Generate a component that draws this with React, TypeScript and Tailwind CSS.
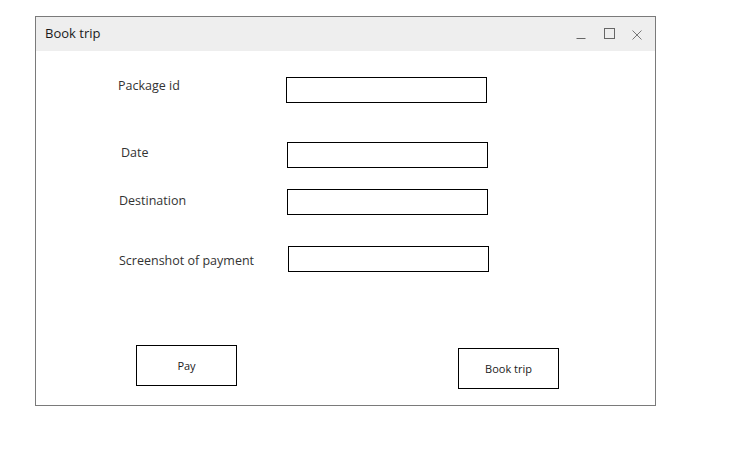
import React from "react";

const font = { fontFamily: '"Open Sans", "Noto Sans", sans-serif' };

function Field({ label, rowMt, labelMl, labelMt, inputMl, inputMt }: { label: string; rowMt: string; labelMl: string; labelMt: string; inputMl: string; inputMt: string }) {
  return (
    <div className={`flex items-start ${rowMt}`}>
      <div className={`${labelMl} ${labelMt} w-[160px] shrink-0 text-[12.5px] leading-[18px] text-[#333333]`}>{label}</div>
      <div className={`${inputMl} ${inputMt} h-[26px] w-[201px] shrink-0 border border-[#000000] bg-white`} />
    </div>
  );
}

export default function App() {
  return (
    <div className="h-[449px] w-[738px] bg-white pl-[35px] pt-[16px]" style={font}>
      <div className="flex h-[390px] w-[621px] flex-col border border-[#7a7a7a] bg-white">
        <div className="flex h-[34px] items-center bg-[#eeeeee] pl-[9px] pr-[13px]">
          <span className="text-[13px] text-[#1a1a1a]">Book trip</span>
          <div className="ml-auto flex items-center">
            <svg width="10" height="12" viewBox="0 0 10 12" className="mt-[2px]">
              <line x1="0.5" y1="9.5" x2="9.5" y2="9.5" stroke="#666" strokeWidth="1" />
            </svg>
            <svg width="12" height="12" viewBox="0 0 12 12" className="ml-[17px]">
              <rect x="1.5" y="0.5" width="10" height="10" fill="none" stroke="#666" strokeWidth="1" />
            </svg>
            <svg width="10" height="10" viewBox="0 0 10 10" className="ml-[17px] mt-[1px]">
              <line x1="0.5" y1="0.5" x2="9.5" y2="9.5" stroke="#777" strokeWidth="1" />
              <line x1="9.5" y1="0.5" x2="0.5" y2="9.5" stroke="#777" strokeWidth="1" />
            </svg>
          </div>
        </div>
        <Field label="Package id" rowMt="mt-[25px]" labelMl="ml-[82px]" labelMt="mt-[1px]" inputMl="ml-[8px]" inputMt="mt-[1px]" />
        <Field label="Date" rowMt="mt-[39px]" labelMl="ml-[85px]" labelMt="mt-[2px]" inputMl="ml-[6px]" inputMt="mt-0" />
        <Field label="Destination" rowMt="mt-[21px]" labelMl="ml-[83px]" labelMt="mt-[3px]" inputMl="ml-[8px]" inputMt="mt-0" />
        <Field label="Screenshot of payment" rowMt="mt-[31px]" labelMl="ml-[83px]" labelMt="mt-[6px]" inputMl="ml-[9px]" inputMt="mt-0" />
        <div className="mt-[73px] flex items-start">
          <div className="ml-[100px] flex h-[41px] w-[101px] items-center justify-center border border-black pt-[2px] text-[11px] text-[#1a1a1a]">Pay</div>
          <div className="ml-[221px] mt-[3px] flex h-[41px] w-[101px] items-center justify-center border border-black pt-[2px] text-[11px] text-[#1a1a1a]">Book trip</div>
        </div>
      </div>
    </div>
  );
}
